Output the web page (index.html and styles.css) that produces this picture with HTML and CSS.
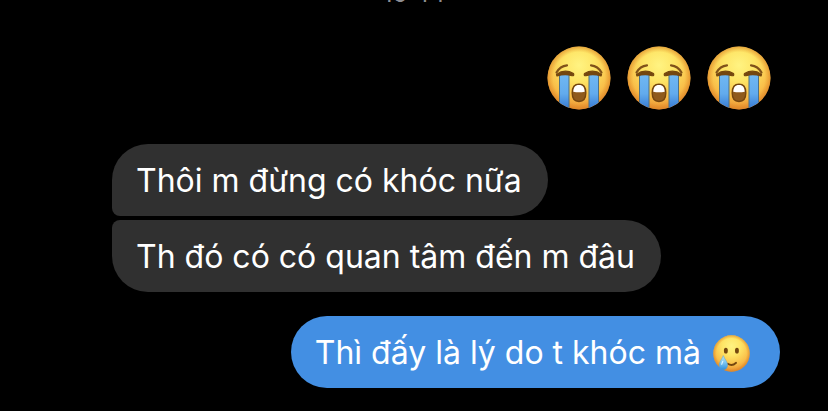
FILE: index.html
```html
<!DOCTYPE html>
<html lang="vi">
<head>
<meta charset="utf-8">
<meta name="viewport" content="width=device-width, initial-scale=1">
<title>Chat</title>
<link rel="stylesheet" href="styles.css">
</head>
<body>
<svg class="defs" aria-hidden="true">
  <defs>
    <radialGradient id="face" cx=".5" cy=".3" r=".72">
      <stop offset="0" stop-color="#fff382"/>
      <stop offset=".35" stop-color="#fee566"/>
      <stop offset=".72" stop-color="#f9bd48"/>
      <stop offset="1" stop-color="#e4862c"/>
    </radialGradient>
    <radialGradient id="rim" cx=".5" cy=".5" r=".5">
      <stop offset=".82" stop-color="#e08a24" stop-opacity="0"/>
      <stop offset="1" stop-color="#d98325" stop-opacity=".6"/>
    </radialGradient>
    <linearGradient id="stream" x1="0" y1="0" x2="0" y2="1">
      <stop offset="0" stop-color="#70b8f3"/>
      <stop offset=".55" stop-color="#62abed"/>
      <stop offset="1" stop-color="#3275d0"/>
    </linearGradient>
    <linearGradient id="drop" x1="0" y1="0" x2="0" y2="1">
      <stop offset="0" stop-color="#b4e2f6"/>
      <stop offset=".5" stop-color="#7cc6f0"/>
      <stop offset="1" stop-color="#2f8fdc"/>
    </linearGradient>
    <clipPath id="round"><circle cx="32" cy="32" r="31.500"/></clipPath>
    <symbol id="sob" viewBox="0 0 64 64">
      <circle cx="32" cy="32" r="31.500" fill="url(#face)"/>
      <circle cx="32" cy="32" r="31.500" fill="url(#rim)"/>
      <g clip-path="url(#round)">
        <path d="M12.500 28h9.500v36h-9.500zM42 28h9.500v36H42z" fill="url(#stream)"/>
        <path d="M12.500 29v35M22 29v35M42 29v35M51.500 29v35" stroke="#4d7186" stroke-width="1" fill="none"/>
      </g>
      <path d="M9.500 26.500Q13 20 20 19.300M54.500 26.500Q51 20 44 19.300" fill="none" stroke="#80521a" stroke-width="2.200" stroke-linecap="round"/>
      <path d="M9.500 28.500Q17.500 22.500 26.500 27.500Q27.500 30 25 29.700Q18 27.500 10 30ZM54.500 28.500Q46.500 22.500 37.500 27.500Q36.500 30 39 29.700Q46 27.500 54 30Z" fill="#74470f" stroke="#74470f" stroke-width="1.200" stroke-linejoin="round"/>
      <path d="M32 38.300c-5 0-6.800 4-6.800 8.700 0 5.200 2 8.500 6.800 8.500s6.800-3.300 6.800-8.500c0-4.700-1.800-8.700-6.800-8.700z" fill="#8f5a1c" stroke="#74450f" stroke-width="1.400"/>
      <path d="M32 39c-4 0-5.500 2.500-5.700 6.800q5.700 1 11.400 0c-.2-4.300-1.700-6.800-5.700-6.800z" fill="#fff"/>
    </symbol>
    <symbol id="smile-tear" viewBox="0 0 36 36">
      <circle cx="18" cy="18" r="17.700" fill="url(#face)"/>
      <circle cx="18" cy="18" r="17.700" fill="url(#rim)"/>
      <ellipse cx="12.500" cy="15.300" rx="1.900" ry="2.800" fill="#74470f"/>
      <ellipse cx="23.300" cy="15.300" rx="1.900" ry="2.800" fill="#74470f"/>
      <path d="M14.500 28Q18.500 30.800 22.500 27" fill="none" stroke="#74470f" stroke-width="1.700" stroke-linecap="round"/>
      <path d="M10 20C8.500 24 6 26 6 29.300a4.100 4.500 0 0 0 8.200 0C14.200 26 11.500 24 10 20Z" fill="url(#drop)" stroke="#4b9cd2" stroke-width=".4"/>
      <path d="M8.500 28.500Q8.800 27 9.600 25.500" fill="none" stroke="#e4f7ff" stroke-width="1" stroke-linecap="round"/>
    </symbol>
  </defs>
</svg>
<main class="chat">
  <time class="stamp">16:44</time>
  <div class="emoji-message" role="img" aria-label="😭😭😭">
    <svg class="emoji-large"><use href="#sob"/></svg>
    <svg class="emoji-large"><use href="#sob"/></svg>
    <svg class="emoji-large"><use href="#sob"/></svg>
  </div>
  <div class="received">
    <p class="bubble first">Thôi m đừng có khóc nữa</p>
    <p class="bubble last">Th đó có có quan tâm đến m đâu</p>
  </div>
  <p class="bubble sent">Thì đấy là lý do t khóc mà <svg class="emoji-small" role="img" aria-label="🥲"><use href="#smile-tear"/></svg></p>
</main>
</body>
</html>
```
FILE: styles.css
```css
* {
  box-sizing: border-box;
}

body {
  margin: 0;
  background: #000;
  color: #fff;
  font-family: Inter, "Noto Sans", sans-serif;
  overflow: hidden;
}

.defs {
  position: absolute;
  width: 0;
  height: 0;
}

.chat {
  display: flex;
  flex-direction: column;
  padding: 0 48px 24px 112px;
}

.stamp {
  align-self: center;
  margin-top: -16px;
  margin-right: 64px;
  color: #8e8e93;
  font-size: 24px;
  line-height: 20px;
}

.emoji-message {
  display: flex;
  align-self: flex-end;
  gap: 16px;
  margin: 42px 9px 0 0;
}

.emoji-large {
  width: 64px;
  height: 64px;
}

.received {
  display: flex;
  flex-direction: column;
  align-items: flex-start;
  gap: 4px;
  margin: 34px 0 24px;
}

.bubble {
  margin: 0;
  padding: 17px 26px 15px 24px;
  border-radius: 36px;
  background: #303030;
  font-size: 32px;
  line-height: 40px;
}

.first {
  border-bottom-left-radius: 8px;
}

.last {
  border-top-left-radius: 8px;
}

.sent {
  display: flex;
  align-self: flex-end;
  align-items: center;
  gap: 12px;
  padding-right: 30px;
  background: #438fe3;
}

.emoji-small {
  width: 37px;
  height: 37px;
}
```
